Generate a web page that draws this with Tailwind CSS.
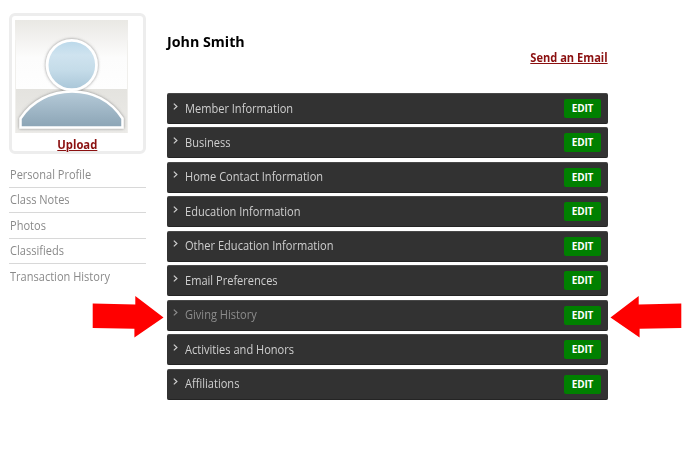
<!DOCTYPE html>
<html lang="en">
<head>
<meta charset="utf-8">
<title>Member Profile</title>
<script src="https://cdn.jsdelivr.net/npm/@tailwindcss/browser@4"></script>
</head>
<body class="relative flex h-[460px] w-[690px] overflow-hidden bg-white font-['Open_Sans',sans-serif]">
  <aside class="ml-[9px] mt-[13px] w-[137px] shrink-0">
    <div class="h-[141px] rounded-md border-[3px] border-[#ededed] pl-[3px] pt-1">
      <svg class="block" width="113" height="113" viewBox="0 0 113 113">
        <defs>
          <linearGradient id="wall" x1="0" y1="0" x2="0" y2="1"><stop offset="0" stop-color="#e9e8e4"/><stop offset=".55" stop-color="#fcfcfc"/><stop offset="1" stop-color="#fefefe"/></linearGradient>
          <linearGradient id="floor" x1="0" y1="0" x2="0" y2="1"><stop offset="0" stop-color="#e4e3df"/><stop offset="1" stop-color="#ecebe8"/></linearGradient>
          <linearGradient id="head" x1="0" y1="0" x2="0" y2="1"><stop offset="0" stop-color="#bad8ea"/><stop offset=".3" stop-color="#cfe3ef"/><stop offset=".6" stop-color="#c5dce9"/><stop offset="1" stop-color="#a9c6d8"/></linearGradient>
          <linearGradient id="torso" x1="0" y1="0" x2="0" y2="1"><stop offset="0" stop-color="#b5cad8"/><stop offset="1" stop-color="#8ba4b5"/></linearGradient>
          <filter id="shade" x="-20%" y="-20%" width="140%" height="140%"><feDropShadow dx="0" dy="0" stdDeviation="1.800" flood-color="#777" flood-opacity=".85"/></filter>
        </defs>
        <rect width="113" height="69" fill="url(#wall)"/>
        <rect y="69" width="113" height="44" fill="url(#floor)"/>
        <path d="M.5 20V113M112.500 20V113" stroke="#f0efec"/>
        <g filter="url(#shade)">
          <path d="M5.500 107.500V98.500C17 81 36 71.500 57 71.500S96 81 107.500 98.500V107.500Z" fill="url(#torso)" stroke="#fff" stroke-width="2.500"/>
          <circle cx="56.800" cy="45" r="24.700" fill="url(#head)" stroke="#fff" stroke-width="2.800"/>
        </g>
      </svg>
      <div class="-ml-[3px] flex h-[24px] items-center justify-center text-[12px] font-bold leading-none text-[#8b1010]"><a class="scale-x-[.940] underline">Upload</a></div>
    </div>
    <nav class="mt-[8px] text-[12px] text-[#8a8a8a]">
      <div class="h-[25.500px] border-b border-[#d8d8d8] pl-[.5px] leading-[25px]"><a class="inline-block origin-left scale-x-[.920]">Personal Profile</a></div>
      <div class="h-[25.500px] border-b border-[#d8d8d8] pl-[.5px] leading-[24px]"><a class="inline-block origin-left scale-x-[.920]">Class Notes</a></div>
      <div class="h-[25.500px] border-b border-[#d8d8d8] pl-[.5px] leading-[25px]"><a class="inline-block origin-left scale-x-[.920]">Photos</a></div>
      <div class="h-[25.500px] border-b border-[#d8d8d8] pl-[.5px] leading-[24px]"><a class="inline-block origin-left scale-x-[.920]">Classifieds</a></div>
      <div class="h-[25.500px] pl-[.5px] leading-[25px]"><a class="inline-block origin-left scale-x-[.920]">Transaction History</a></div>
    </nav>
  </aside>
  <main class="ml-[21px] w-[441px] shrink-0">
    <header class="flex h-[93px] justify-between">
      <h1 class="mt-[31px] origin-left scale-x-[.950] text-[15px] font-bold leading-[20px] text-black">John Smith</h1>
      <a class="mr-[.5px] mt-[49px] origin-right scale-x-[.925] text-[12px] font-bold leading-[18px] text-[#8b1010] underline">Send an Email</a>
    </header>
    <section id="rows" class="flex flex-col gap-[3.450px]"></section>
  </main>
  <svg class="absolute left-[92px] top-[295px]" width="72" height="43" viewBox="0 0 72 43"><path d="M.7 8.500L43.300 9.500V1L71.500 22.500L42.400 42.500V33.800L.7 33Z" fill="#f00"/></svg>
  <svg class="absolute left-[610px] top-[295px]" width="72" height="43" viewBox="0 0 72 43"><path d="M71.300 8.500L28.700 9.500V1L.5 22.500L29.600 42.500V33.800L71.300 33Z" fill="#f00"/></svg>
  <template id="row">
    <div class="flex h-[31px] items-center rounded-[2px] border-y border-t-[#484848] border-b-[#242424] bg-[#323232] pl-[6px] pr-[7px] text-[12px] text-[#cfcfcf]">
      <svg class="mb-[5px] mr-[7px]" width="5" height="7" viewBox="0 0 5 7"><path d="M.8.600L3.900 3.500L.8 6.400" fill="none" stroke="currentColor" stroke-width="1.200"/></svg>
      <span class="inline-block origin-left scale-x-[.922] leading-[18px]"></span>
      <button class="ml-auto h-[19px] w-[37px] rounded-[2px] bg-[#008000] text-[10px] font-bold leading-[19px] tracking-[-.150px] text-white">EDIT</button>
    </div>
  </template>
  <script>
    const rows = document.getElementById('rows');
    const template = document.getElementById('row');
    ['Member Information', 'Business', 'Home Contact Information', 'Education Information', 'Other Education Information', 'Email Preferences', 'Giving History', 'Activities and Honors', 'Affiliations'].forEach(name => {
      const row = template.content.cloneNode(true);
      row.querySelector('span').textContent = name;
      if (name === 'Giving History') row.firstElementChild.classList.replace('text-[#cfcfcf]', 'text-[#8c8c8c]');
      rows.append(row);
    });
  </script>
</body>
</html>
